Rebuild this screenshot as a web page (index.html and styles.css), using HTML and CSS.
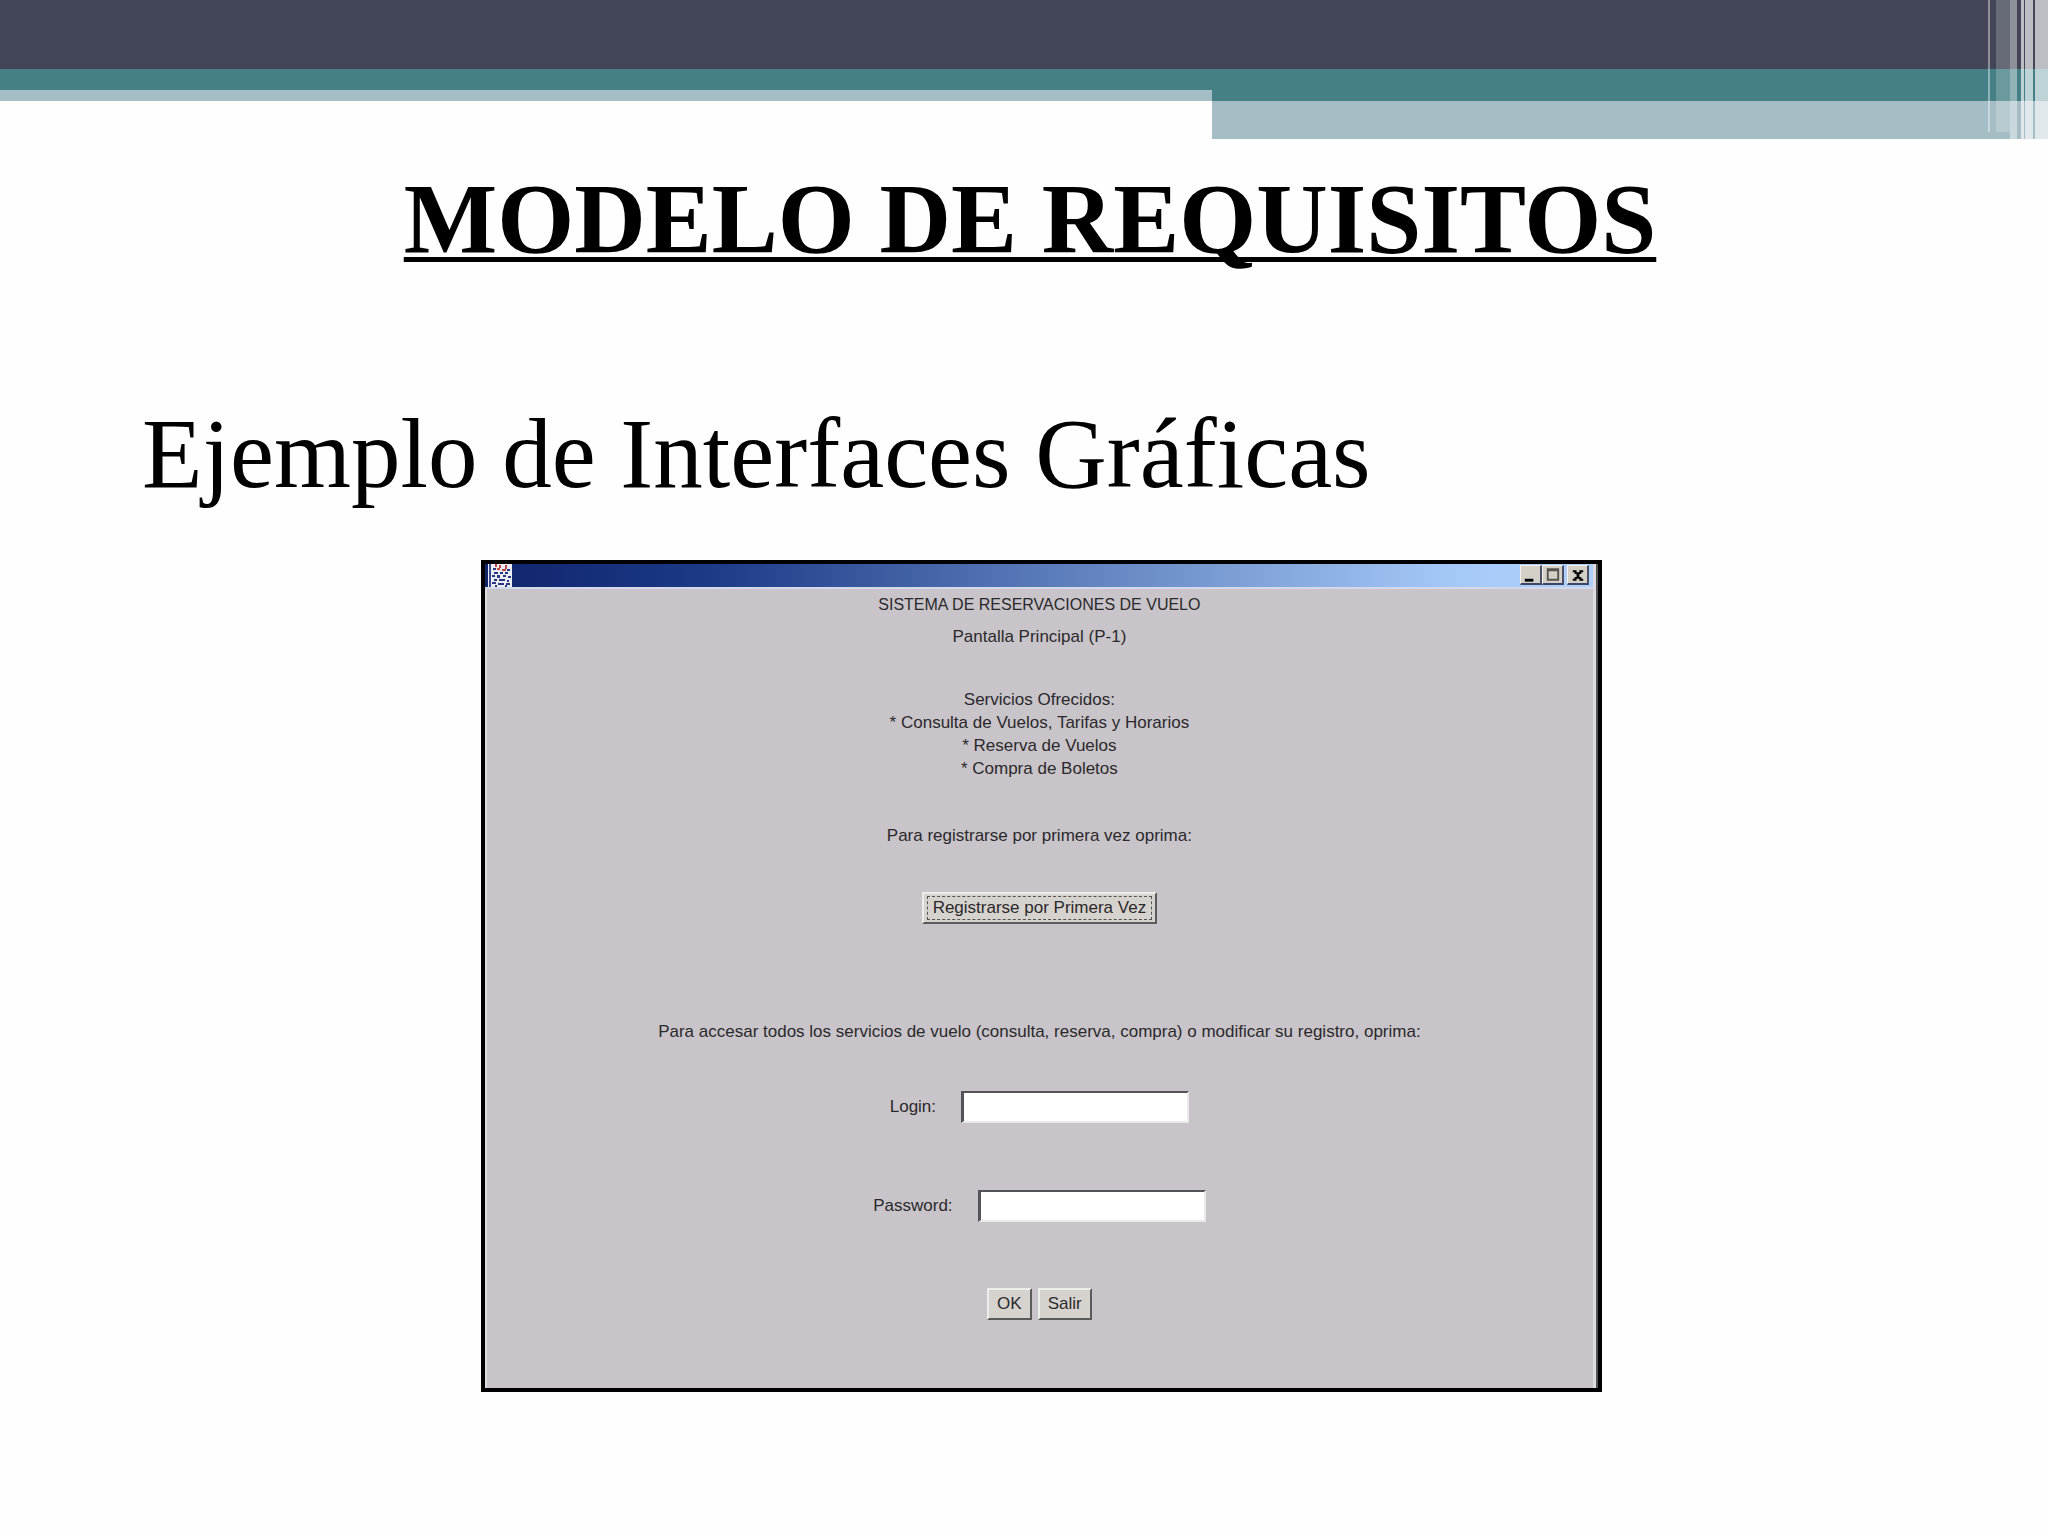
FILE: index.html
```html
<!DOCTYPE html>
<html lang="es">
<head>
    <meta charset="UTF-8">
    <meta name="viewport" content="width=device-width, initial-scale=1.0">
    <title>Modelo de Requisitos</title>
    <link rel="stylesheet" href="styles.css">
</head>
<body>
    <header class="banner">
        <div class="banner-dark"></div>
        <div class="banner-bands">
            <div class="band-left"></div>
            <div class="band-right"></div>
        </div>
        <!-- Franjas verticales sobre la esquina derecha -->
        <div class="stripes">
            <span class="stripe thin short"></span>
            <span class="stripe wide short"></span>
            <span class="stripe medium"></span>
            <span class="stripe line"></span>
            <span class="stripe bright"></span>
            <span class="stripe edge"></span>
        </div>
    </header>
    <main>
        <h1>MODELO DE REQUISITOS</h1>
        <h2>Ejemplo de Interfaces Gráficas</h2>

        <section class="window">
            <div class="title-bar">
                <svg class="app-icon" viewBox="0 0 24 23" aria-hidden="true">
                    <rect width="24" height="23" fill="#e9edf8"/>
                    <path d="M1 0h2v23H1z" fill="#3a4a8c"/>
                    <path d="M7 0h2v3H7zM17 1h2v4h-2zM9 4h3v2H9zM14 5h4v2h-4zM11 1h2v3h-2z" fill="#c8453f"/>
                    <path d="M5 4h3v2H5zM19 5h3v2h-3zM6 8h4v2H6zM12 8h3v2h-3zM17 8h3v2h-3zM4 11h3v2H4zM9 11h3v3H9zM15 11h3v2h-3zM20 12h3v2h-3zM6 15h3v2H6zM11 15h6v2h-6zM19 16h2v2h-2zM4 18h4v2H4zM10 19h6v2h-6zM18 19h4v2h-4zM7 21h2v2H7zM17 21h2v2h-2z" fill="#2c3680"/>
                </svg>
                <div class="window-buttons">
                    <button type="button" aria-label="Minimizar">
                        <svg viewBox="0 0 20 17"><path d="M4 13h9v3H4z"/></svg>
                    </button>
                    <button type="button" aria-label="Maximizar">
                        <svg viewBox="0 0 20 17"><path d="M4 2h13v13H4zM6 5v8h9V5z" fill="#55524f" fill-rule="evenodd"/></svg>
                    </button>
                    <button type="button" class="close" aria-label="Cerrar">
                        <svg viewBox="0 0 20 17"><path d="M5 4h4v2h3V4h4v2h-2v2h-2v3h2v2h2v2h-4v-2H9v2H5v-2h2v-2h2V8H7V6H5z"/></svg>
                    </button>
                </div>
            </div>
            <form class="window-body">
                <p class="system-name">SISTEMA DE RESERVACIONES DE VUELO</p>
                <p class="screen-name">Pantalla Principal (P-1)</p>
                <div class="services">
                    <p>Servicios Ofrecidos:</p>
                    <p>* Consulta de Vuelos, Tarifas y Horarios</p>
                    <p>* Reserva de Vuelos</p>
                    <p>* Compra de Boletos</p>
                </div>
                <p class="register-text">Para registrarse por primera vez oprima:</p>
                <button type="button" class="btn register"><span>Registrarse por Primera Vez</span></button>
                <p class="access-text">Para accesar todos los servicios de vuelo (consulta, reserva, compra) o modificar su registro, oprima:</p>
                <div class="field">
                    <label for="login">Login:</label>
                    <input type="text" id="login">
                </div>
                <div class="field">
                    <label for="password">Password:</label>
                    <input type="password" id="password">
                </div>
                <div class="actions">
                    <button type="button" class="btn">OK</button>
                    <button type="button" class="btn">Salir</button>
                </div>
            </form>
        </section>
    </main>
</body>
</html>
```
FILE: styles.css
```css
* {
    box-sizing: border-box;
}
body {
    margin: 0;
    background-color: #fefefe;
    color: #000;
    font-family: Georgia, "Liberation Serif", serif;
}
h1, h2, p {
    margin: 0;
}

/* Banda superior */
.banner {
    position: relative;
}
.banner-dark {
    height: 69px;
    background-color: #424656;
}
.banner-bands {
    display: flex;
    align-items: flex-start;
}
.band-left {
    width: 59.2%;
    height: 32px;
    background-color: #458086;
    border-bottom: 11px solid #a5bec5;
}
.band-right {
    flex: 1;
    height: 70px;
    background-color: #458086;
    border-bottom: 38px solid #a5bec5;
}
.stripes {
    position: absolute;
    top: 0;
    right: 0;
    height: 100%;
    display: flex;
}
.stripe {
    background-color: rgba(255, 255, 255, 0.65);
}
.stripe.short {
    margin-bottom: 7px;
}
.stripe.thin {
    width: 2px;
    margin-right: 6px;
    background-color: rgba(255, 255, 255, 0.4);
}
.stripe.wide {
    width: 14px;
    background-color: rgba(255, 255, 255, 0.2);
}
.stripe.medium {
    width: 7px;
    margin-right: 4px;
    background-color: rgba(255, 255, 255, 0.4);
}
.stripe.line {
    width: 3px;
    margin-right: 1px;
}
.stripe.bright {
    width: 8px;
    margin-right: 2px;
}
.stripe.edge {
    width: 13px;
}

/* Contenido */
h1, h2 {
    font-size: 99px;
    line-height: 112px;
}
h1 {
    margin-top: 24px;
    padding-left: 12px;
    text-align: center;
    text-decoration: underline;
    text-decoration-thickness: 5px;
    text-underline-offset: 5px;
    text-decoration-skip-ink: none;
}
h2 {
    margin-top: 123px;
    padding-left: 142px;
    font-weight: normal;
}

/* Ventana */
.window {
    width: 54.7%;
    margin: 50px auto 144px 23.5%;
    border: 4px solid #000;
    font-family: "Liberation Sans", Arial, sans-serif;
    font-size: 17px;
    line-height: 24px;
    color: #2b292c;
    background-color: #c8c4c9;
    box-shadow: inset -2px 0 #555357, inset -5px 0 #dedce0, inset 2px 0 #dddbe0;
}
.title-bar {
    display: flex;
    justify-content: space-between;
    margin-right: 5px;
    padding-left: 3px;
    height: 25px;
    background: linear-gradient(to right, #10246c, #1c3a86 20%, #a6caf8 88%, #b0d0fc);
    border-bottom: 2px solid #d3d9ea;
}
.app-icon {
    width: 24px;
    height: 23px;
}
.window-buttons {
    display: flex;
    padding: 1px 4px 0 0;
}
.window-buttons button {
    width: 22px;
    height: 20px;
    padding: 0;
    border: 1px solid #f4f2ee;
    border-right: 2px solid #4b5068;
    border-bottom: 2px solid #3c4668;
    background-color: #d4d0c8;
}
.window-buttons .close {
    margin-left: 3px;
}
.window-buttons svg {
    display: block;
    width: 100%;
    height: 100%;
}
.window-body {
    display: flex;
    flex-direction: column;
    align-items: center;
    padding: 4px 6px 68px 2px;
    text-align: center;
}
.system-name {
    font-size: 16px;
}
.screen-name {
    margin-top: 8px;
}
.services {
    margin-top: 39px;
    line-height: 23px;
}
.register-text {
    margin-top: 44px;
}
.btn {
    height: 32px;
    padding: 0 8px;
    border: 2px solid #efedea;
    border-right-color: #5d5a5c;
    border-bottom-color: #5d5a5c;
    background-color: #d6d2cd;
    color: #2b292c;
    font-family: inherit;
    font-size: 17px;
}
.btn.register {
    margin-top: 44px;
    padding: 0 3px;
}
.register span {
    display: block;
    padding: 0 5px;
    border: 1px dashed #55524f;
    line-height: 22px;
}
.access-text {
    margin-top: 96px;
}
.field {
    display: flex;
    align-items: center;
    gap: 25px;
    margin-top: 67px;
}
.access-text + .field {
    margin-top: 47px;
}
.field input {
    width: 228px;
    height: 32px;
    padding: 0 4px;
    border: 2px solid #ece9ec;
    border-top-color: #565259;
    border-left: 3px solid #565259;
    background-color: #fff;
    font-family: inherit;
    font-size: 17px;
}
.actions {
    display: flex;
    gap: 6px;
    margin-top: 66px;
}
```
